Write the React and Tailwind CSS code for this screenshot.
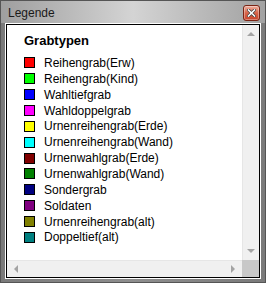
import React from 'react';

const grabtypen = [
  { name: 'Reihengrab(Erw)', color: '#ff0000' },
  { name: 'Reihengrab(Kind)', color: '#00ff00' },
  { name: 'Wahltiefgrab', color: '#0000ff' },
  { name: 'Wahldoppelgrab', color: '#ff00ff' },
  { name: 'Urnenreihengrab(Erde)', color: '#ffff00' },
  { name: 'Urnenreihengrab(Wand)', color: '#00ffff' },
  { name: 'Urnenwahlgrab(Erde)', color: '#800000' },
  { name: 'Urnenwahlgrab(Wand)', color: '#008000' },
  { name: 'Sondergrab', color: '#000080' },
  { name: 'Soldaten', color: '#800080' },
  { name: 'Urnenreihengrab(alt)', color: '#808000' },
  { name: 'Doppeltief(alt)', color: '#008080' },
];

function Arrow({ dir }) {
  const points = {
    up: '0,5 4,1 8,5',
    down: '0,1 4,5 8,1',
    left: '5,0 1,4 5,8',
    right: '1,0 5,4 1,8',
  }[dir];
  const size = dir === 'up' || dir === 'down' ? { w: 8, h: 6 } : { w: 6, h: 8 };
  return (
    <svg width={size.w} height={size.h} viewBox={`0 0 ${size.w} ${size.h}`}>
      <polygon points={points} fill="#a3a3a3" />
    </svg>
  );
}

function CloseButton() {
  return (
    <div className="w-[17px] h-[16px] rounded-[3px] border border-[#7a2414] bg-gradient-to-b from-[#eeb0a0] via-[#d8644a] to-[#c8432a] flex items-center justify-center shadow-[inset_0_0_0_1px_rgba(255,255,255,0.35)]">
      <svg width="9" height="8" viewBox="0 0 9 8">
        <path d="M1.5 1 L7.5 7 M7.5 1 L1.5 7" stroke="#3a3a3a" strokeWidth="3" strokeLinecap="square" />
        <path d="M1.5 1 L7.5 7 M7.5 1 L1.5 7" stroke="#ffffff" strokeWidth="1.6" strokeLinecap="square" />
      </svg>
    </div>
  );
}

export default function App() {
  return (
    <div className="w-[266px] h-[283px] border border-[#555555] bg-[#7d7d7d] flex flex-col font-['Liberation_Sans',Arial,sans-serif]">
      <div className="h-[22px] flex items-start justify-between pl-[7px] pr-[5px] bg-gradient-to-r from-[#9f9f9f] via-[#d4d4d4] to-[#a2a2a2]">
        <span className="text-[12px] leading-[12px] mt-[6px] text-[#1a1a1a]">Legende</span>
        <div className="mt-[4px]">
          <CloseButton />
        </div>
      </div>
      <div className="bg-gradient-to-r from-[#7a7a7a] via-[#8e8e8e] to-[#7a7a7a] flex-1 px-[4px] pb-[3px]">
        <div className="border border-white h-full">
          <div className="border border-black h-full bg-white flex flex-col">
            <div className="flex flex-1 min-h-0">
              <div className="flex-1 pl-[17px] pt-[8px]">
                <div className="text-[13px] leading-[16px] font-bold text-black">Grabtypen</div>
                <div className="mt-[6px] flex flex-col">
                  {grabtypen.map((g) => (
                    <div key={g.name} className="h-[15.87px] flex items-center">
                      <span
                        className="w-[11px] h-[11px] border border-black shrink-0"
                        style={{ backgroundColor: g.color }}
                      />
                      <span className="ml-[9px] text-[12px] leading-[14px] text-black whitespace-nowrap">{g.name}</span>
                    </div>
                  ))}
                </div>
              </div>
              <div className="w-[17px] bg-[#f0f0f0] border-l border-[#e6e6e6] flex flex-col items-center justify-between py-[6px]">
                <Arrow dir="up" />
                <Arrow dir="down" />
              </div>
            </div>
            <div className="h-[17px] flex">
              <div className="flex-1 bg-[#f0f0f0] border-t border-[#e6e6e6] flex items-center justify-between px-[6px]">
                <Arrow dir="left" />
                <Arrow dir="right" />
              </div>
              <div className="w-[17px] bg-[#c8c8c8]" />
            </div>
          </div>
        </div>
      </div>
    </div>
  );
}
